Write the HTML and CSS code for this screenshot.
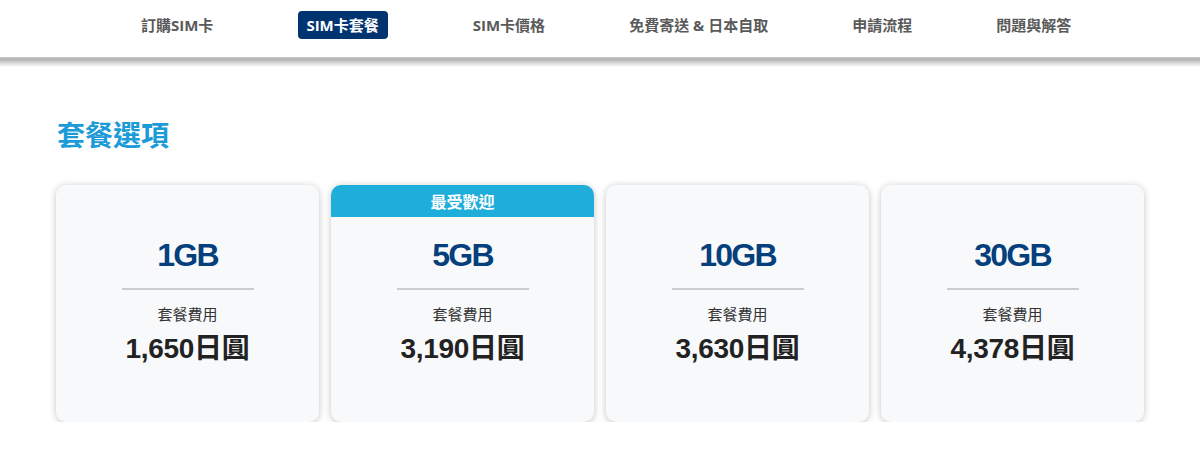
FILE: index.html
```html
<!DOCTYPE html>
<html lang="zh-Hant">
<head>
<meta charset="utf-8">
<title>SIM卡套餐</title>
<link rel="stylesheet" href="styles.css">
</head>
<body>
<header class="site-header">
  <nav class="nav">
    <a class="nav-item nav-wide">訂購SIM卡</a>
    <a class="nav-item nav-wide nav-active">SIM卡套餐</a>
    <a class="nav-item">SIM卡價格</a>
    <a class="nav-item">免費寄送 &amp; 日本自取</a>
    <a class="nav-item">申請流程</a>
    <a class="nav-item">問題與解答</a>
  </nav>
  <div class="nav-shadow"></div>
</header>
<main class="main">
  <h2 class="section-title">套餐選項</h2>
  <div class="plans">
    <div class="plan">
      <div class="plan-size">1GB</div>
      <div class="plan-rule"></div>
      <div class="plan-label">套餐費用</div>
      <div class="plan-price">1,650日圓</div>
    </div>
    <div class="plan">
      <div class="plan-badge">最受歡迎</div>
      <div class="plan-size">5GB</div>
      <div class="plan-rule"></div>
      <div class="plan-label">套餐費用</div>
      <div class="plan-price">3,190日圓</div>
    </div>
    <div class="plan">
      <div class="plan-size">10GB</div>
      <div class="plan-rule"></div>
      <div class="plan-label">套餐費用</div>
      <div class="plan-price">3,630日圓</div>
    </div>
    <div class="plan">
      <div class="plan-size">30GB</div>
      <div class="plan-rule"></div>
      <div class="plan-label">套餐費用</div>
      <div class="plan-price">4,378日圓</div>
    </div>
  </div>
</main>
</body>
</html>
```

FILE: styles.css
```css
* { box-sizing: border-box; }
html, body { margin: 0; padding: 0; background: #ffffff; }
body {
  font-family: "Open Sans", "Noto Sans CJK TC", sans-serif;
  color: #333;
}
.site-header { background: #fff; }
.nav {
  height: 57px;
  display: flex;
  align-items: center;
  gap: 68px;
  padding-left: 133px;
}
.nav-item {
  font-family: "Open Sans", "Noto Sans CJK TC", sans-serif;
  font-size: 15px;
  font-weight: 700;
  color: #5a5a5a;
  padding: 0 8px;
  height: 28px;
  line-height: 28px;
  border-radius: 4px;
  white-space: nowrap;
  margin-top: -7px;
}
.nav-wide { margin-right: 9px; }
.nav-active {
  background: #003471;
  color: #fff;
  padding: 0 9px 0 8px;
}
.nav-shadow {
  height: 10px;
  background: linear-gradient(to bottom, #c9c9c9 0%, #b4b4b4 25%, #d9d9d9 60%, #f6f6f6 90%, #ffffff 100%);
}
.main {
  width: 1088px;
  margin: 0 auto;
  padding-top: 47px;
}
.section-title {
  margin: 0 0 31px 1px;
  font-family: "Noto Sans CJK TC", sans-serif;
  font-size: 28px;
  line-height: 40px;
  font-weight: 700;
  color: #1b9bd7;
}
.plans {
  display: grid;
  grid-template-columns: repeat(4, 1fr);
  gap: 12px;
}
.plan {
  position: relative;
  height: 237px;
  background: #f8f9fa;
  border-radius: 10px;
  box-shadow: 0 1px 7px rgba(0, 0, 0, 0.24);
  padding-top: 51px;
  display: flex;
  flex-direction: column;
  align-items: center;
}
.plan-badge {
  position: absolute;
  top: 0;
  left: 0;
  right: 0;
  height: 32px;
  line-height: 32px;
  border-radius: 10px 10px 0 0;
  background: #1fadda;
  color: #fff;
  text-align: center;
  font-family: "Noto Sans CJK TC", sans-serif;
  font-size: 16px;
  font-weight: 700;
}
.plan-size {
  font-family: "Liberation Sans", Arial, sans-serif;
  font-size: 32px;
  line-height: 38px;
  font-weight: 700;
  letter-spacing: -1.8px;
  color: #053f7c;
}
.plan-rule {
  width: 132px;
  height: 2px;
  background: #cccccc;
  margin-top: 14px;
}
.plan-label {
  margin-top: 13px;
  font-family: "Noto Sans CJK TC", sans-serif;
  font-size: 15px;
  line-height: 22px;
  color: #333;
}
.plan-price {
  margin-top: 6px;
  font-family: "Liberation Sans", "Noto Sans CJK TC", sans-serif;
  font-size: 28px;
  line-height: 36px;
  font-weight: 700;
  letter-spacing: -0.3px;
  color: #222;
}
```
